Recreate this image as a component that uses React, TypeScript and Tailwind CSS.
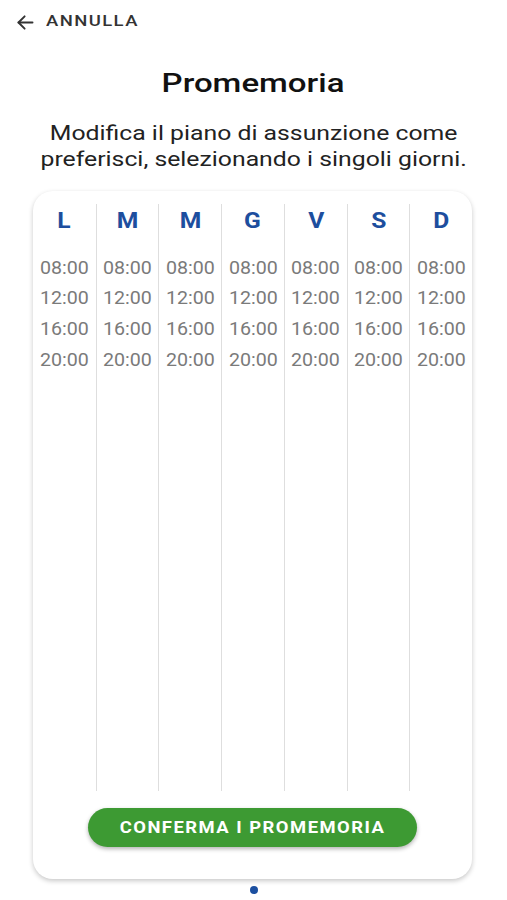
import React from "react";

const days = ["L", "M", "M", "G", "V", "S", "D"];
const times = ["08:00", "12:00", "16:00", "20:00"];

export default function App() {
  return (
    <div className="w-[507px] h-[900px] bg-white overflow-hidden" style={{ fontFamily: "Roboto, 'Noto Sans', sans-serif" }}>
      <div className="flex items-center h-[43px] pl-[15px] pt-[1px]">
        <svg width="21" height="21" viewBox="0 0 24 24" fill="none" stroke="#333" strokeWidth="2.2" strokeLinecap="round" strokeLinejoin="round">
          <path d="M20 12H4" />
          <path d="M11 5l-7 7 7 7" />
        </svg>
        <span className="ml-[10px] inline-block origin-left scale-x-[1.19] text-[15.5px] font-medium tracking-[1.2px] text-[#333]">ANNULLA</span>
      </div>
      <h1 className="mt-[23px] text-center text-[26px] leading-[34px] font-medium text-[#111]">
        <span className="inline-block scale-x-[1.27]">Promemoria</span>
      </h1>
      <p className="mt-[20px] text-center text-[21px] leading-[26px] text-[#222]">
        <span className="inline-block scale-x-[1.18]">Modifica il piano di assunzione come<br />preferisci, selezionando i singoli giorni.</span>
      </p>
      <div className="ml-[33px] mt-[19px] w-[439px] h-[688px] rounded-[20px] bg-white shadow-[0_2px_5px_rgba(0,0,0,0.22)] pt-[13px] flex flex-col">
        <div className="grid grid-cols-7 h-[587px]">
          {days.map((d, i) => (
            <div key={i} className={`flex flex-col items-center ${i > 0 ? "border-l border-[#dedede]" : ""}`}>
              <div className="mt-[3px] h-[28px] leading-[28px] text-[22px] font-bold text-[#1d4e9e]">
                <span className="inline-block scale-x-[1.12]">{d}</span>
              </div>
              <div className="mt-[17.5px] flex flex-col items-center">
                {times.map((t) => (
                  <div key={t} className="h-[30.7px] leading-[30.7px] text-[18px] text-[#7a7a7a]">
                    <span className="inline-block scale-x-[1.09]">{t}</span>
                  </div>
                ))}
              </div>
            </div>
          ))}
        </div>
        <div className="flex justify-center mt-[17px]">
          <button className="w-[329px] h-[39px] rounded-full bg-[#3d9a33] text-white text-[16px] font-bold tracking-[1.3px] shadow-[0_2px_4px_rgba(0,0,0,0.3)]">
            <span className="inline-block scale-x-[1.15]">CONFERMA I PROMEMORIA</span>
          </button>
        </div>
      </div>
      <div className="flex justify-center mt-[7px]">
        <div className="w-[8px] h-[8px] rounded-full bg-[#1b4fa0]" />
      </div>
    </div>
  );
}
